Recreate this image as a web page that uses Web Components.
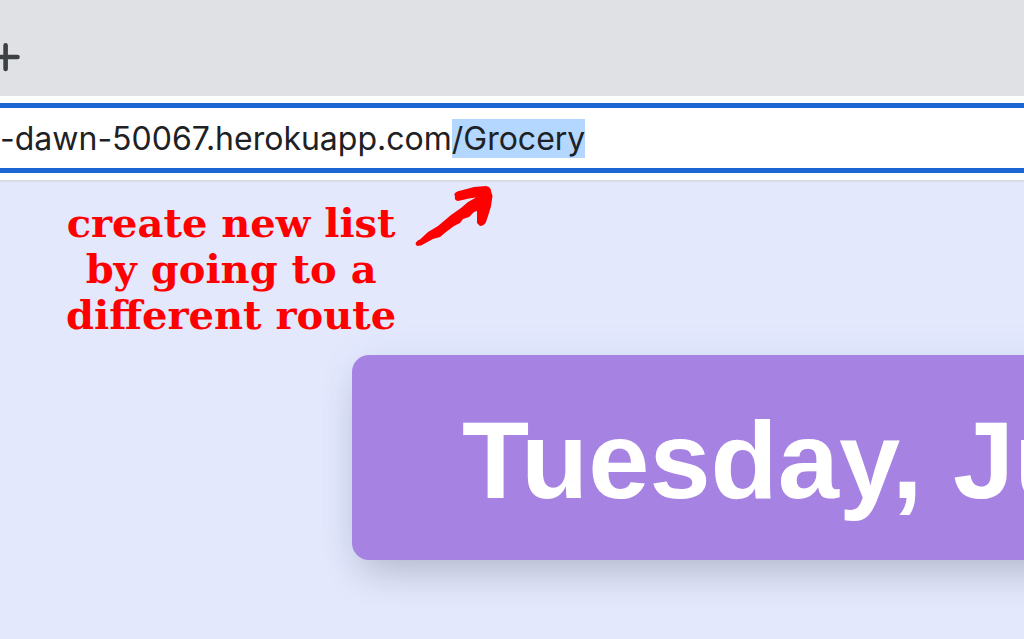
<!DOCTYPE html>
<html lang="en">
<head>
<meta charset="utf-8">
<title>Grocery</title>
<style>
html, body { margin: 0; min-height: 100%; background: #e3e8fd; }
body { overflow: hidden; }
</style>
</head>
<body>
<browser-window>
  <tab-strip slot="chrome"></tab-strip>
  <address-bar slot="chrome" path="/Grocery">-dawn-50067.herokuapp.com</address-bar>
  <route-note>create new list<br>by going to a<br>different route</route-note>
  <date-card>Tuesday, Ju</date-card>
</browser-window>
<script>
class Base extends HTMLElement {
  connectedCallback() {
    this.attachShadow({ mode: "open" }).innerHTML = this.render();
    this.ready();
  }
  ready() {}
}

customElements.define("browser-window", class extends Base {
  render() {
    return `<style>
      :host { display: block; }
      header { border-bottom: 2px solid #dadce3; }
      main { overflow: hidden; padding-bottom: 80px; }
    </style>
    <header><slot name="chrome"></slot></header>
    <main><slot></slot></main>`;
  }
});

customElements.define("tab-strip", class extends Base {
  render() {
    return `<style>
      :host { display: flex; height: 96px; background: #dfe1e5; }
      button { margin: 40px 0 0; padding: 0; border: 0; background: none; width: 24px; height: 34px; }
      svg { display: block; }
    </style>
    <button aria-label="New tab"><svg width="24" height="34" viewBox="0 0 24 34" fill="none" stroke="#3c4043" stroke-width="4.6" stroke-linecap="round"><path d="M-8 17H17.500M5.600 5.300V29"/></svg></button>`;
  }
});

customElements.define("address-bar", class extends Base {
  render() {
    return `<style>
      :host { display: block; padding: 7px 0; background: #fff; }
      input {
        display: block; box-sizing: border-box; width: 100%; height: 70px;
        margin: 0; padding: 0; border: solid #1b66d2; border-width: 5px 0;
        background: #fff; outline: 0; border-radius: 0; caret-color: transparent;
        font: 32px/42px Inter, sans-serif; color: #202124;
      }
      input::selection { background: #b3d7ff; color: #202124; }
    </style>
    <input type="text" aria-label="Address" spellcheck="false">`;
  }
  ready() {
    const input = this.shadowRoot.querySelector("input");
    const host = this.textContent.trim();
    input.value = host + this.getAttribute("path");
    input.focus();
    input.setSelectionRange(host.length, input.value.length);
  }
});

customElements.define("route-note", class extends Base {
  render() {
    return `<style>
      :host { display: flex; align-items: flex-start; gap: 16px; padding: 2px 0 0 66px; }
      p { margin: 16px 0 0; text-align: center; font: bold 40px/46px "DejaVu Serif", serif; color: #f00; white-space: nowrap; }
      svg { display: block; flex: none; }
    </style>
    <p><slot></slot></p>
    <svg width="84" height="64" viewBox="412 184 84 64" fill="#f00" aria-hidden="true">
      <path d="M415.500 244Q416 241 420 239.500L428 232L438 226L451 215L461 208L468 202L476 197.500L469 198.500L458 201Q454 200 455 197L454.300 194Q456 191 461 190.500L474 187L486 186Q491 187 491 191L492.500 196L491 206L489 213L486 222Q484 226 480 226L477 223L477 211L474 212L469 217L463 219L460 223L454 226L446 232L440 237L433 239L421 245.500L417 246Z"/>
    </svg>`;
  }
});

customElements.define("date-card", class extends Base {
  render() {
    return `<style>
      :host { display: block; margin: 17px -80px 0 352px; border-radius: 17px; background: #a682e3; box-shadow: 0 20px 40px -10px rgba(0,0,0,.2), 0 0 40px rgba(70,110,160,.06); }
      h1 { margin: 0; padding: 40px 0 35px 110px; font: bold 110px/130px "Liberation Sans", Arial, sans-serif; color: #fff; white-space: nowrap; }
    </style>
    <h1><slot></slot></h1>`;
  }
});
</script>
</body>
</html>
